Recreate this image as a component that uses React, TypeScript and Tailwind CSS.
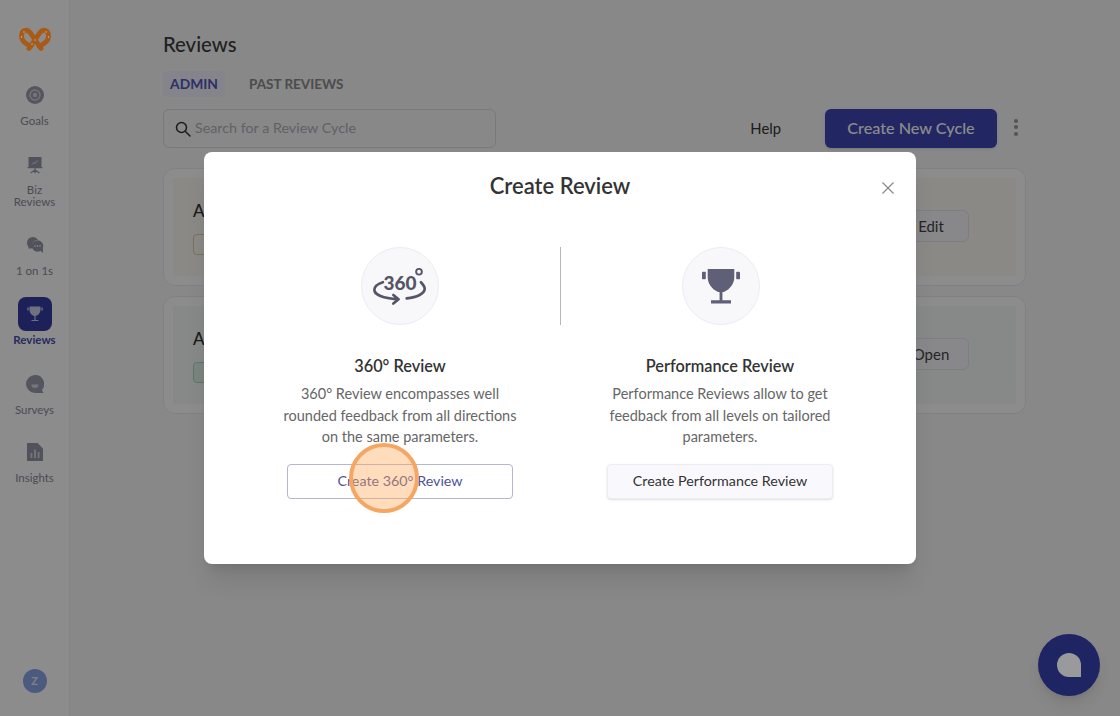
const navItems = [
  { name: "Goals", icon: "goals", offset: "" },
  { name: "Biz Reviews", icon: "biz", offset: "" },
  { name: "1 on 1s", icon: "chat", offset: "" },
  { name: "Reviews", icon: "trophy", active: true, offset: "" },
  { name: "Surveys", icon: "survey", offset: "" },
  { name: "Insights", icon: "insights", offset: "-mt-[2px]" },
];

function NavIcon({ name }: { name: string }) {
  if (name === "goals") {
    return (
      <svg width="18" height="18" viewBox="0 0 18 18">
        <circle cx="9" cy="9" r="9" fill="#9c9cae" />
        <circle cx="9" cy="9" r="5" fill="none" stroke="#fff" strokeOpacity="0.55" strokeWidth="1.4" />
        <circle cx="9" cy="9" r="2.2" fill="#fff" fillOpacity="0.55" />
      </svg>
    );
  }
  if (name === "biz") {
    return (
      <svg width="18" height="18" viewBox="0 0 18 18">
        <rect x="2.5" y="1" width="13" height="10.5" fill="#9696aa" />
        <rect x="1.5" y="11" width="15" height="1.2" fill="#9696aa" />
        <path d="M9 12v2.5M9 14L4.5 17M9 14l4.500 3M9 14v3.5" stroke="#9696aa" strokeWidth="1.1" fill="none" />
        <path d="M6 8.5l2-2 1 1 2.5-3" stroke="#fff" strokeOpacity="0.7" strokeWidth="1" fill="none" />
      </svg>
    );
  }
  if (name === "chat") {
    return (
      <svg width="18" height="18" viewBox="0 0 18 18">
        <path d="M1 7a6 6 0 0 1 11-3.3A6 6 0 0 0 6 10v2.2L2.5 12.800V11A6 6 0 0 1 1 7z" fill="#9696aa" />
        <circle cx="11.500" cy="10" r="5.800" fill="#9696aa" />
        <path d="M14 14.500l3 2.500v-5z" fill="#9696aa" />
        <circle cx="9" cy="10" r="0.800" fill="#fff" />
        <circle cx="11.500" cy="10" r="0.800" fill="#fff" />
        <circle cx="14" cy="10" r="0.800" fill="#fff" />
      </svg>
    );
  }
  if (name === "trophy") {
    return (
      <svg width="18" height="18" viewBox="0 0 18 18">
        <path d="M3.500 1.500H14.500V4.500C14.500 8 12 10.500 9.600 11V15H12.500V16H5.500V15H8.400V11C6 10.500 3.500 8 3.500 4.500Z" fill="#fff" fillOpacity="0.75" />
        <rect x="1.300" y="2.500" width="1.400" height="3" fill="#fff" fillOpacity="0.75" />
        <rect x="15.300" y="2.500" width="1.400" height="3" fill="#fff" fillOpacity="0.75" />
      </svg>
    );
  }
  if (name === "survey") {
    return (
      <svg width="18" height="18" viewBox="0 0 18 18">
        <path d="M9 0a9 9 0 1 0 0 18h8.500l-1.600-3A9 9 0 0 0 9 0z" fill="#9c9cae" />
        <path d="M5.500 9.500h7a3.500 3.500 0 0 1-7 0z" fill="#fff" fillOpacity="0.6" />
      </svg>
    );
  }
  return (
    <svg width="16" height="18" viewBox="0 0 16 18">
      <path d="M0 0H10.500L16 5.500V18H0Z" fill="#9696aa" />
      <rect x="3.500" y="10" width="1.800" height="5" fill="#fff" fillOpacity="0.6" />
      <rect x="7.100" y="6.500" width="1.800" height="8.500" fill="#fff" fillOpacity="0.6" />
      <rect x="10.700" y="9" width="1.800" height="6" fill="#fff" fillOpacity="0.6" />
    </svg>
  );
}

function Pretzel() {
  return (
    <svg width="32" height="24" viewBox="0 0 32 24" fill="none" className="relative z-20">
      <g stroke="#a85a18" strokeWidth="4.800" strokeLinecap="round">
        <path d="M22 21.500L11 5.500C8 1.500 2.500 3 2.500 9C2.500 13 6 17 12 19" />
        <path d="M10 21.500L21 5.500C24 1.500 29.500 3 29.500 9C29.500 13 26 17 20 19" />
      </g>
      <g fill="#dfb98c">
        <circle cx="5" cy="5" r="0.700" />
        <circle cx="2.500" cy="10" r="0.700" />
        <circle cx="27" cy="5" r="0.700" />
        <circle cx="29.500" cy="10" r="0.700" />
        <circle cx="16" cy="13" r="0.700" />
        <circle cx="13" cy="17" r="0.700" />
      </g>
    </svg>
  );
}

function ThreeSixtyIcon() {
  return (
    <svg width="76" height="76" viewBox="0 0 80 80" fill="none">
      <path d="M22 36C16 38 13 41 13 44C13 49 22 53 38 54M33 49.500L38.500 54L33 58.500" stroke="#555566" strokeWidth="2.800" strokeLinecap="round" strokeLinejoin="round" />
      <path d="M62 36C64 38 66 40 66 43C66 48 58 52 47 53" stroke="#555566" strokeWidth="2.800" strokeLinecap="round" />
      <circle cx="60" cy="25" r="3" stroke="#555566" strokeWidth="2" />
      <text x="40" y="44" textAnchor="middle" fontFamily="Lato, sans-serif" fontWeight="900" fontSize="20" fill="#555566">360</text>
    </svg>
  );
}

function TrophyIcon() {
  return (
    <svg width="76" height="76" viewBox="0 0 80 80" fill="#5f5f78">
      <path d="M26 22H54V31C54 39 47 45.500 41.500 46.500V55H50.500V58.500H29.500V55H38.500V46.500C33 45.500 26 39 26 31Z" />
      <rect x="20" y="25" width="4" height="8" rx="0.800" />
      <rect x="56" y="25" width="4" height="8" rx="0.800" />
    </svg>
  );
}

function ReviewCard({ tint, boxClass, action }: { tint: string; boxClass: string; action: string }) {
  return (
    <div className="h-[118px] rounded-xl border border-[#ececf2] bg-white p-[9px]">
      <div className={`flex h-[98px] items-center justify-between pl-[20px] pr-[47px] ${tint}`}>
        <div className="flex flex-col gap-[13px] pt-[2px]">
          <div className="text-[17px] font-medium leading-5 text-[#303030]">A</div>
          <div className={`h-[21px] w-[30px] rounded-sm border ${boxClass}`} />
        </div>
        <div className="-mt-[2px] flex h-[32px] w-[76px] items-center justify-center rounded-md border border-[#e4e4ee] bg-[#f8f8fc] text-[15px] text-[#444]">
          {action}
        </div>
      </div>
    </div>
  );
}

export default function App() {
  return (
    <div className="relative flex h-[716px] w-[1120px] overflow-hidden bg-[#f7f7fa] text-[#333]" style={{ fontFamily: "Lato, sans-serif" }}>
      {/* Sidebar */}
      <aside className="flex w-[70px] shrink-0 flex-col items-center border-r border-[#f0f0f0] bg-white pb-[23px] pt-[27px]">
        <Pretzel />
        <nav className="mt-[35px] flex flex-col items-center gap-[28px]">
          {navItems.map((item) =>
            item.active ? (
              <div key={item.name} className="-mt-[9px] flex flex-col items-center">
                <div className="flex h-[34px] w-[34px] items-center justify-center rounded-lg bg-[#343ca4]">
                  <NavIcon name={item.icon} />
                </div>
                <span className="mt-[2px] text-[11.500px] font-bold leading-[14px] text-[#454db0]">{item.name}</span>
              </div>
            ) : (
              <div key={item.name} className={`flex flex-col items-center ${item.offset}`}>
                <NavIcon name={item.icon} />
                <span className={`mt-[10px] w-[44px] text-center text-[11.500px] leading-[12px] text-[#8a8a9a] ${item.name === "Biz Reviews" ? "" : "py-[1px]"}`}>{item.name}</span>
              </div>
            )
          )}
        </nav>
        <div className="mt-auto flex h-[24px] w-[24px] items-center justify-center rounded-full bg-[#8ba4e8] text-[11px] font-bold text-[#e8e8f0]">Z</div>
      </aside>

      {/* Main */}
      <main className="flex-1 pl-[93px] pr-[94px] pt-[33px]">
        <h1 className="text-[20.300px] font-medium leading-[23px] text-[#3c3c3c]">Reviews</h1>
        <div className="mt-[15px] flex items-center gap-[24px]">
          <div className="flex h-[26px] w-[62px] items-center justify-center rounded bg-[#f0f0fc] text-[13.800px] font-bold text-[#5058c0]">ADMIN</div>
          <div className="text-[13.500px] font-bold text-[#8a8a8a]">PAST REVIEWS</div>
        </div>
        <div className="mt-[12px] flex items-center justify-between">
          <div className="flex h-[39px] w-[333px] items-center gap-[4px] rounded-md border border-[#dcdce4] pl-[11px]">
            <svg width="16" height="16" viewBox="0 0 16 16" fill="none" stroke="#333" strokeWidth="1.500" strokeLinecap="round">
              <circle cx="6.500" cy="6.500" r="5" />
              <path d="M10.500 10.500L15 15" />
            </svg>
            <span className="-mt-px text-[14.300px] text-[#b0b0b8]">Search for a Review Cycle</span>
          </div>
          <div className="flex items-center">
            <span className="mr-[44px] text-[14.800px] text-[#333]">Help</span>
            <button className="h-[39px] w-[172px] rounded-md bg-[#3e46b4] text-[16.200px] font-medium text-white shadow">Create New Cycle</button>
            <div className="-mt-[3px] ml-[14px] mr-[5px] flex w-[10px] flex-col items-center gap-[2.500px]">
              <span className="h-[4px] w-[4px] rounded-full bg-[#999]" />
              <span className="h-[4px] w-[4px] rounded-full bg-[#999]" />
              <span className="h-[4px] w-[4px] rounded-full bg-[#999]" />
            </div>
          </div>
        </div>
        <div className="mt-[20px] flex flex-col gap-[10px]">
          <ReviewCard tint="bg-[#fdfaf2]" boxClass="border-[#e8c8a8]" action="Edit" />
          <ReviewCard tint="bg-[#f4faf7]" boxClass="border-[#a8d8c0] bg-[#dff2e8]" action="Open" />
        </div>
      </main>

      {/* Backdrop */}
      <div className="absolute inset-0 z-10 bg-black/45" />

      {/* Chat launcher */}
      <div className="absolute left-[1038px] top-[634px] z-10 flex h-[62px] w-[62px] items-center justify-center rounded-full bg-[#1f2562] shadow-lg">
        <div className="h-[24px] w-[24px] rounded-full rounded-br-sm bg-[#9a9a9c]" />
      </div>

      {/* Modal */}
      <div className="absolute left-[204px] top-[152px] z-20 h-[412px] w-[712px] rounded-lg bg-white px-[36px] shadow-xl">
        <h2 className="pt-[20px] text-center text-[22px] font-semibold leading-[28px] text-[#333]">Create Review</h2>
        <svg width="12" height="12" viewBox="0 0 12 12" fill="none" stroke="#888" strokeWidth="1.200" className="absolute right-[22px] top-[30px]">
          <path d="M0.500 0.500L11.500 11.500M11.500 0.500L0.500 11.500" />
        </svg>
        <div className="mt-[47px] grid grid-cols-2">
          <div className="flex flex-col items-center">
            <div className="flex h-[78px] w-full justify-center">
              <div className="h-[78px] w-[78px] rounded-full border border-[#ececf2] bg-[#f8f8fa]">
                <ThreeSixtyIcon />
              </div>
            </div>
            <h3 className="mt-[30px] text-[16.300px] font-semibold leading-[22px] text-[#333]">360° Review</h3>
            <p className="mt-[6px] w-[250px] text-center text-[14.500px] leading-[21.500px] text-[#666]">360° Review encompasses well rounded feedback from all directions on the same parameters.</p>
            <button className="mt-[16px] h-[35px] w-[226px] rounded border border-[#b4b6d4] bg-white text-[14.300px] text-[#4e5399]">Create 360° Review</button>
          </div>
          <div className="flex flex-col items-center">
            <div className="flex h-[78px] w-full justify-center border-l border-[#b8b8b8]">
              <div className="h-[78px] w-[78px] rounded-full border border-[#ececf2] bg-[#f8f8fa]">
                <TrophyIcon />
              </div>
            </div>
            <h3 className="mt-[30px] text-[16.300px] font-semibold leading-[22px] text-[#333]">Performance Review</h3>
            <p className="mt-[6px] w-[250px] text-center text-[14.500px] leading-[21.500px] text-[#666]">Performance Reviews allow to get feedback from all levels on tailored parameters.</p>
            <button className="mt-[16px] h-[35px] w-[226px] rounded border border-[#ececf4] bg-[#f9f9fd] text-[14.300px] text-[#333] shadow-sm">Create Performance Review</button>
          </div>
        </div>
      </div>

      {/* Click marker */}
      <div className="absolute left-[349px] top-[443px] z-30 h-[70px] w-[70px] rounded-full border-[4px] border-[#f5a662] bg-[#ffa858]/40" />
    </div>
  );
}
